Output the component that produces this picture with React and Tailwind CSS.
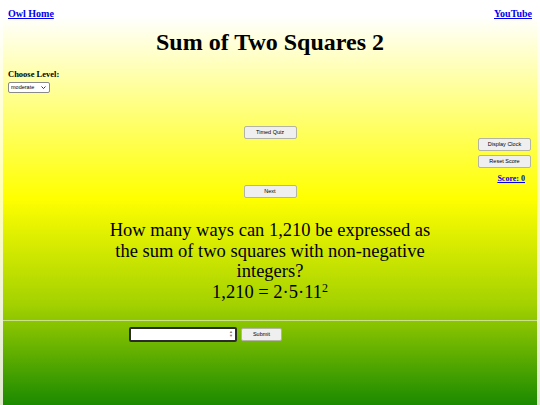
const serif = { fontFamily: '"Liberation Serif", "Times New Roman", serif' };
const sans = { fontFamily: '"Liberation Sans", Arial, sans-serif' };

function Btn({ children, width = 'w-[53px]', className = '' }) {
  return (
    <button
      className={`h-[13px] ${width} rounded-[2px] border border-[#b4b4a4] bg-[#efefef] text-[5.5px] leading-none text-black ${className}`}
      style={sans}
    >
      {children}
    </button>
  );
}

export default function App() {
  return (
    <div className="h-[405px] overflow-hidden bg-[linear-gradient(to_bottom,#ffffff_4%,#ffffb0_48%,#f0f5dc_74%,#dfeacb_100%)] px-[3px]" style={serif}>
      <div className="h-[405px] bg-[linear-gradient(to_bottom,#ffffff_4%,#ffff00_49%,#a4d200_75%,#1b8a00_100%)] px-[5px]">
        <div className="flex justify-between pt-[8px] text-[10px] font-bold leading-[12px]">
          <a href="#" className="text-[#0000ee] underline">Owl Home</a>
          <a href="#" className="text-[#0000ee] underline">YouTube</a>
        </div>

        <h1 className="mt-[8px] text-center text-[24px] font-bold leading-[28px] text-black">Sum of Two Squares 2</h1>

        <div className="mt-[13px] text-[8.5px] font-bold leading-[10px] text-black">Choose Level:</div>
        <div className="relative mt-[3px] h-[11px] w-[42px]">
          <select
            defaultValue="moderate"
            className="block h-[11px] w-[42px] appearance-none rounded-[2px] border border-[#8a8a8a] bg-white pl-[2px] text-[5.5px] leading-none text-black"
            style={sans}
          >
            <option value="easy">easy</option>
            <option value="moderate">moderate</option>
            <option value="hard">hard</option>
          </select>
          <svg className="pointer-events-none absolute right-[4px] top-[4px] h-[3px] w-[5px]" viewBox="0 0 5 3" fill="none">
            <path d="M0.5 0.5 L2.5 2.5 L4.5 0.5" stroke="#222" strokeWidth="0.9" />
          </svg>
        </div>

        <div className="relative mt-[33px] h-[72px]">
          <div className="flex justify-center">
            <Btn>Timed Quiz</Btn>
          </div>
          <div className="absolute right-[1px] top-[12px] flex flex-col items-end gap-[4px]">
            <Btn>Display Clock</Btn>
            <Btn>Reset Score</Btn>
            <a href="#" className="mt-[2px] mr-[6px] text-[8px] font-bold leading-[10px] text-[#0000ee] underline">Score: 0</a>
          </div>
          <div className="mt-[46px] flex justify-center">
            <Btn>Next</Btn>
          </div>
        </div>

        <div className="mt-[22px] text-center text-[18.5px] leading-[20.5px] text-black">
          <p>How many ways can 1,210 be expressed as</p>
          <p>the sum of two squares with non-negative</p>
          <p>integers?</p>
          <p>
            1,210 = 2·5·11<sup className="text-[12px]">2</sup>
          </p>
        </div>

        <hr className="-mx-[5px] mt-[18px] border-t border-[#d8e8a8] opacity-80" />

        <div className="mt-[6px] flex items-start pl-[121px]">
          <div className="relative">
            <input
              type="number"
              className="block h-[15px] w-[108px] rounded-[2px] border-2 border-[#2b2b2b] bg-white text-[8px] outline-none"
            />
            <div className="pointer-events-none absolute right-[4px] top-[3px] flex flex-col items-center text-[4px] leading-[4px] text-[#777]" style={sans}>
              <span>▲</span>
              <span>▼</span>
            </div>
          </div>
          <Btn width="w-[41px]" className="ml-[4px] mt-[1px]">Submit</Btn>
        </div>
      </div>
    </div>
  );
}
